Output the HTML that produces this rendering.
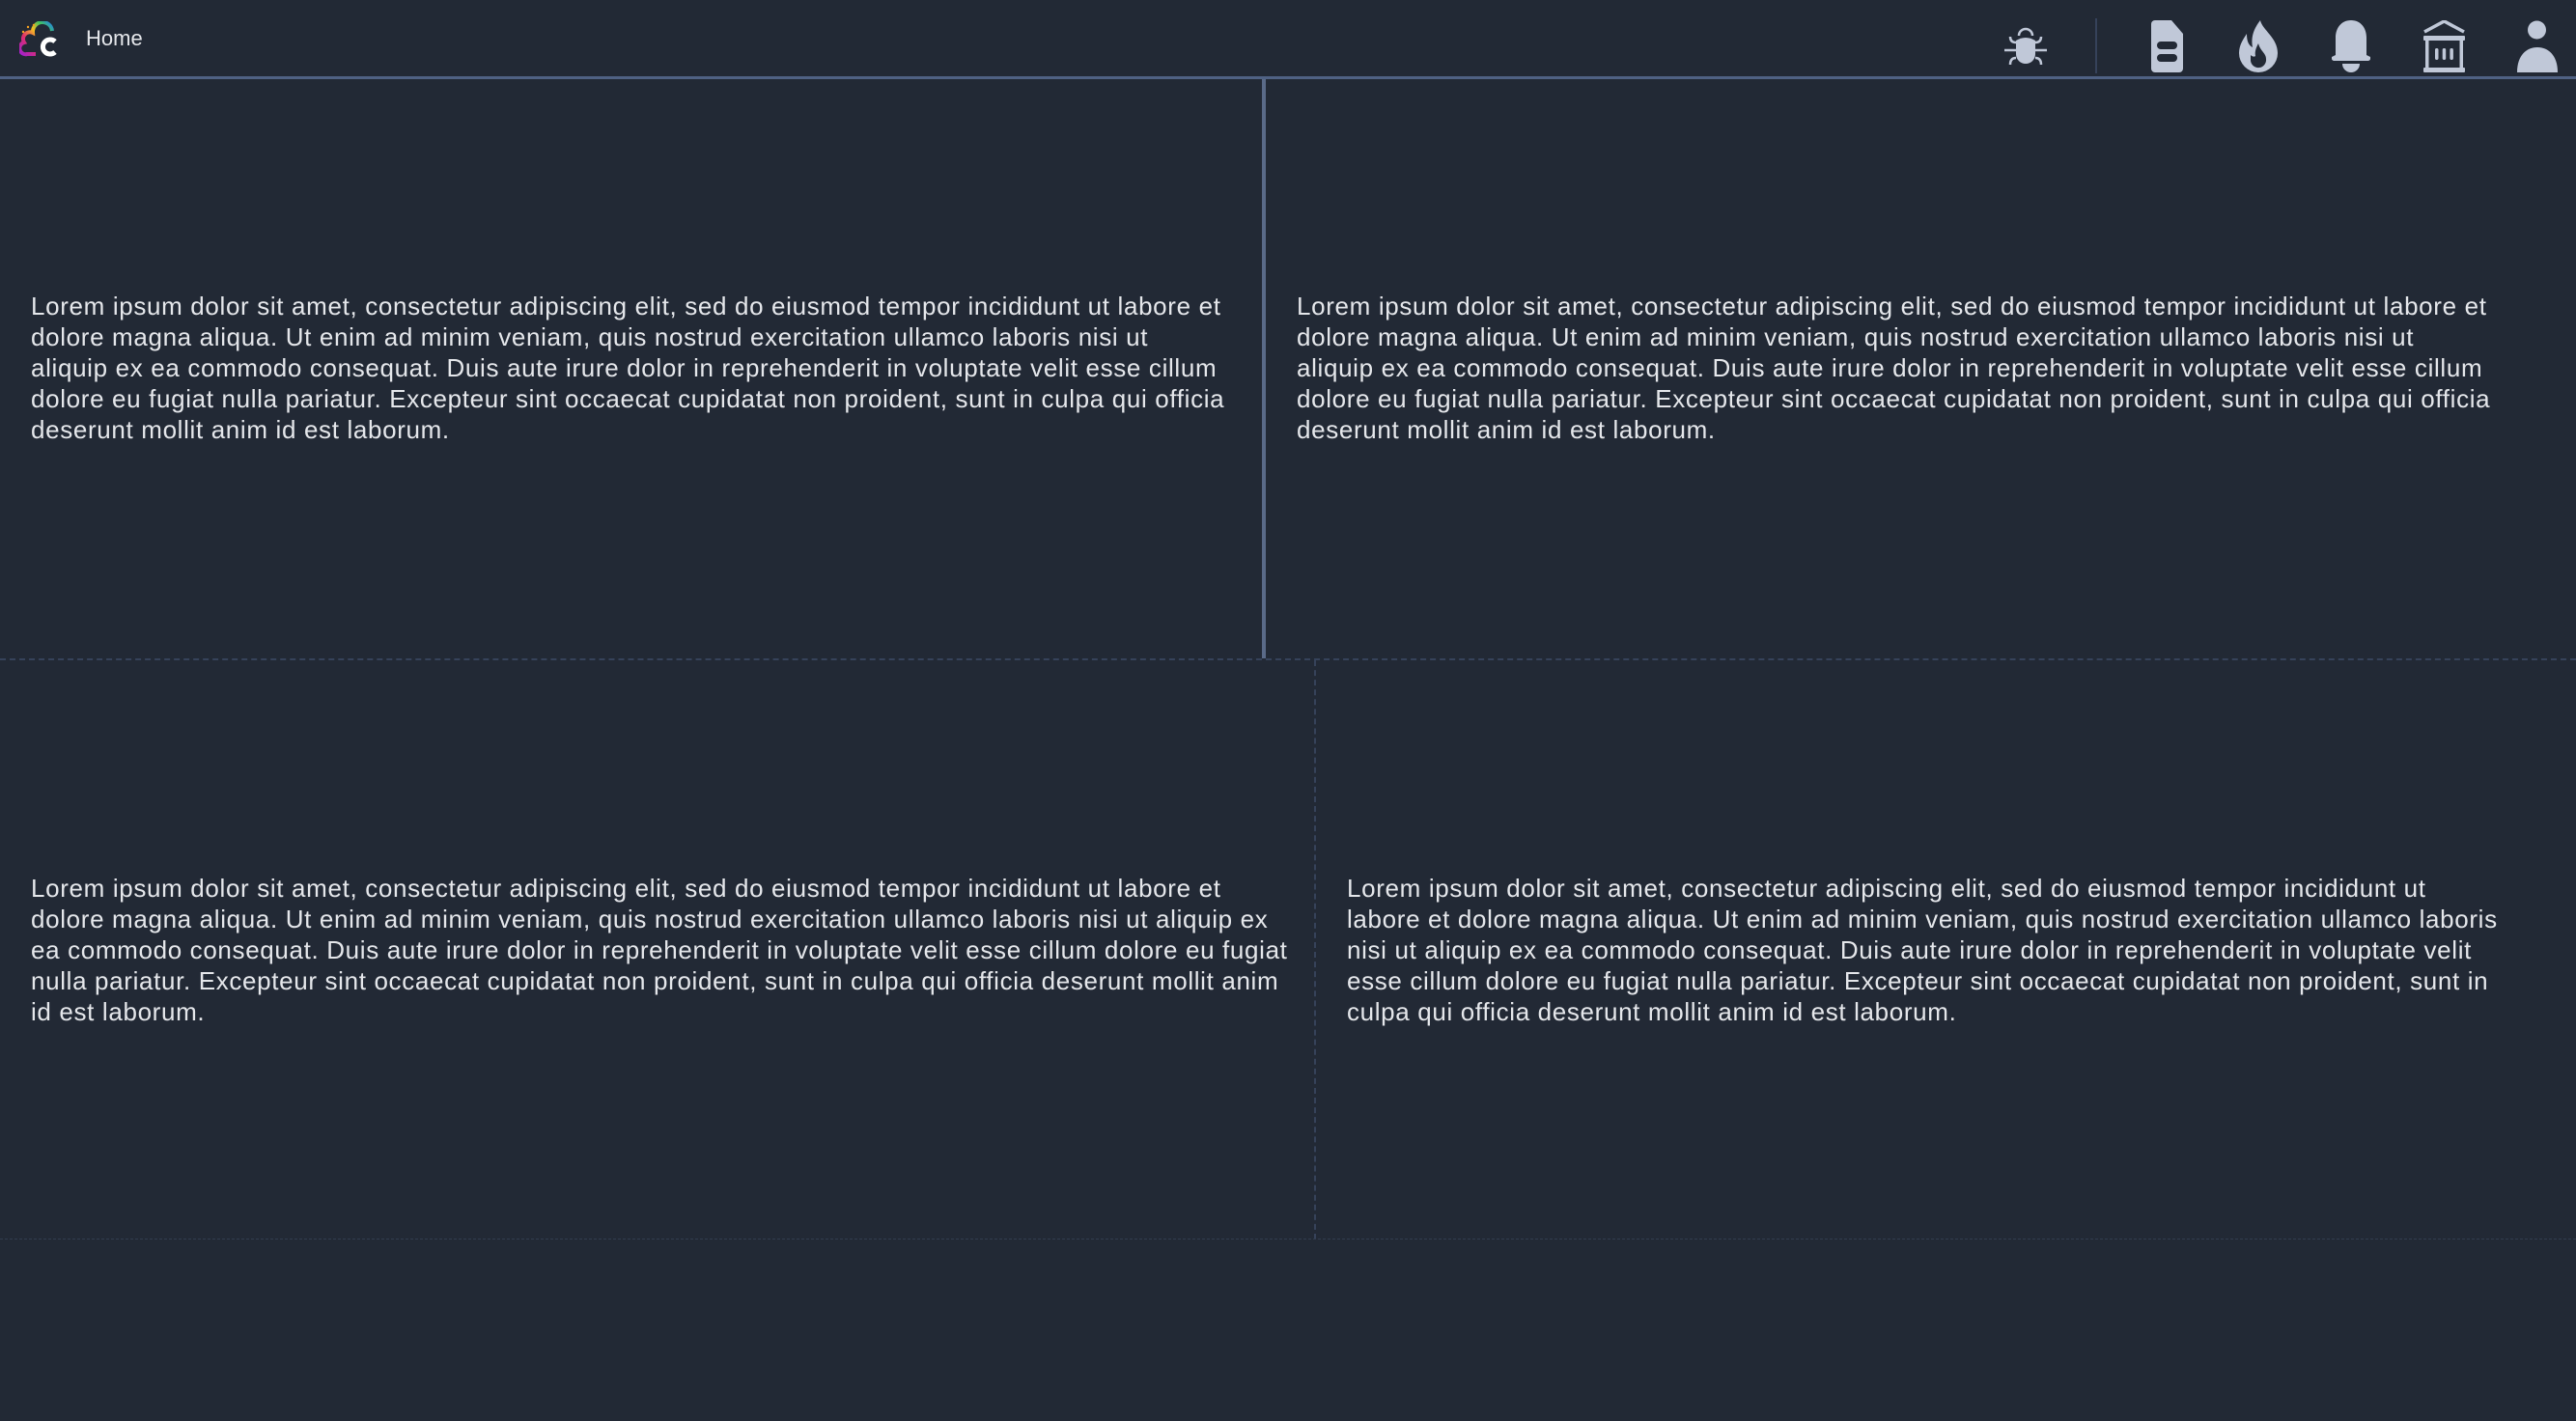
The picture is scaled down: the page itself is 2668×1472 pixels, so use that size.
<!DOCTYPE html>
<html><head><meta charset="utf-8"><style>
*{margin:0;padding:0;box-sizing:border-box}
html,body{width:2668px;height:1472px;background:#222935;overflow:hidden;font-family:"Liberation Sans",sans-serif;color:#e5e7eb}
.hdr{position:absolute;left:0;top:0;width:2668px;height:82px;border-bottom:3px solid #4f6183}
.home{position:absolute;left:89px;top:27px;font-size:22px;color:#e5e7eb}
.t{position:absolute;font-size:26px;line-height:32px;letter-spacing:0.65px;white-space:nowrap;color:#e5e7eb}
.ic{position:absolute;fill:#c0c8d8}
</style></head><body>
<div class="hdr"></div>
<svg style="position:absolute;left:20px;top:22px" width="42" height="38" viewBox="0 0 42 38">
<defs><linearGradient id="g" x1="0" y1="1" x2="1" y2="0"><stop offset="0" stop-color="#a020d0"/><stop offset="0.35" stop-color="#e0306a"/><stop offset="0.6" stop-color="#f5c020"/><stop offset="0.8" stop-color="#40c060"/><stop offset="1" stop-color="#2080f0"/></linearGradient></defs>
<path d="M17 34 H8 A6 6 0 0 1 5 22 A7 7 0 0 1 14 12 A10 10 0 0 1 34 10" fill="none" stroke="url(#g)" stroke-width="4"/>
<circle cx="4" cy="11" r="1.2" fill="#f5a020"/><circle cx="9" cy="6" r="1.2" fill="#f5a020"/><circle cx="15" cy="4" r="1.2" fill="#f5a020"/>
<path d="M37 21 A7.5 7.5 0 1 0 37 32" fill="none" stroke="#fff" stroke-width="5"/>
</svg>
<div class="home">Home</div>
<svg class="ic" style="left:2076px;top:28px" width="44" height="42" viewBox="0 0 44 42">
<path d="M15 9 A7 7 0 0 1 29 9" fill="none" stroke="#c0c8d8" stroke-width="2.5"/>
<path d="M12 14 Q22 8 32 14 V28 A10 10 0 0 1 12 28 Z"/>
<g stroke="#c0c8d8" stroke-width="2.5" fill="none"><path d="M0 24 H44"/><path d="M12 16 Q6 16 6 10"/><path d="M32 16 Q38 16 38 10"/><path d="M12 32 Q6 32 6 39"/><path d="M32 32 Q38 32 38 39"/></g>
</svg>
<div style="position:absolute;left:2170px;top:19px;width:2px;height:57px;background:#36425a"></div>
<svg class="ic" style="left:2228px;top:21px" width="33" height="54" viewBox="0 0 33 54">
<path d="M4 0 H21 L33 14 V50 A4 4 0 0 1 29 54 H4 A4 4 0 0 1 0 50 V4 A4 4 0 0 1 4 0 Z"/>
<rect x="6" y="22" width="21" height="8" rx="4" fill="#222935"/><rect x="6" y="35" width="21" height="8" rx="4" fill="#222935"/>
</svg>
<svg class="ic" style="left:2319px;top:21px" width="40" height="54" viewBox="0 0 40 54">
<path d="M22 0 C24 10 40 18 40 34 A20 20 0 0 1 0 34 C0 26 4 20 8 14 C8 22 10 26 14 28 C12 16 16 8 22 0 Z"/>
<path d="M20 24 C22 32 28 34 28 40 A8 8 0 0 1 12 42 L12 36 C14 38 16 38 17 37 C16 32 18 28 20 24 Z" fill="#222935"/>
</svg>
<svg class="ic" style="left:2415px;top:21px" width="40" height="54" viewBox="0 0 40 54">
<path d="M20 0 C30 0 36 8 36 18 V36 L40 38 A3 3 0 0 1 38 42 H2 A3 3 0 0 1 0 38 L4 36 V18 C4 8 10 0 20 0 Z"/>
<path d="M11 45 H29 A9 9 0 0 1 11 45 Z"/>
</svg>
<svg class="ic" style="left:2509px;top:21px" width="45" height="54" viewBox="0 0 45 54">
<path d="M2 12 L22.5 1 L43 12" fill="none" stroke="#c0c8d8" stroke-width="3.5" stroke-linejoin="round"/>
<rect x="1" y="16" width="43" height="5" rx="1"/>
<rect x="3" y="21" width="3.5" height="28"/><rect x="38.5" y="21" width="3.5" height="28"/>
<rect x="1" y="49" width="43" height="5" rx="1"/>
<rect x="13" y="29" width="3.5" height="12" rx="1.7"/><rect x="20.7" y="29" width="3.5" height="12" rx="1.7"/><rect x="28.4" y="29" width="3.5" height="12" rx="1.7"/>
</svg>
<svg class="ic" style="left:2607px;top:21px" width="42" height="54" viewBox="0 0 42 54">
<circle cx="20.5" cy="10" r="9.5"/>
<path d="M0 54 C0 36 10 28 21 28 C32 28 42 36 42 54 Z"/>
</svg>
<div style="position:absolute;left:1307px;top:82px;width:4px;height:600px;background:#5a6a88"></div>
<div style="position:absolute;left:0;top:682px;width:2668px;border-top:2px dashed #36425a"></div>
<div style="position:absolute;left:1361px;top:684px;height:600px;border-left:2px dashed #36425a"></div>
<div style="position:absolute;left:0;top:1283px;width:2668px;border-top:1px dashed #313c4f"></div>

<div class="t" style="left:32px;top:301px">Lorem ipsum dolor sit amet, consectetur adipiscing elit, sed do eiusmod tempor incididunt ut labore et<br>dolore magna aliqua. Ut enim ad minim veniam, quis nostrud exercitation ullamco laboris nisi ut<br>aliquip ex ea commodo consequat. Duis aute irure dolor in reprehenderit in voluptate velit esse cillum<br>dolore eu fugiat nulla pariatur. Excepteur sint occaecat cupidatat non proident, sunt in culpa qui officia<br>deserunt mollit anim id est laborum.</div>
<div class="t" style="left:1343px;top:301px">Lorem ipsum dolor sit amet, consectetur adipiscing elit, sed do eiusmod tempor incididunt ut labore et<br>dolore magna aliqua. Ut enim ad minim veniam, quis nostrud exercitation ullamco laboris nisi ut<br>aliquip ex ea commodo consequat. Duis aute irure dolor in reprehenderit in voluptate velit esse cillum<br>dolore eu fugiat nulla pariatur. Excepteur sint occaecat cupidatat non proident, sunt in culpa qui officia<br>deserunt mollit anim id est laborum.</div>
<div class="t" style="left:32px;top:904px">Lorem ipsum dolor sit amet, consectetur adipiscing elit, sed do eiusmod tempor incididunt ut labore et<br>dolore magna aliqua. Ut enim ad minim veniam, quis nostrud exercitation ullamco laboris nisi ut aliquip ex<br>ea commodo consequat. Duis aute irure dolor in reprehenderit in voluptate velit esse cillum dolore eu fugiat<br>nulla pariatur. Excepteur sint occaecat cupidatat non proident, sunt in culpa qui officia deserunt mollit anim<br>id est laborum.</div>
<div class="t" style="left:1395px;top:904px">Lorem ipsum dolor sit amet, consectetur adipiscing elit, sed do eiusmod tempor incididunt ut<br>labore et dolore magna aliqua. Ut enim ad minim veniam, quis nostrud exercitation ullamco laboris<br>nisi ut aliquip ex ea commodo consequat. Duis aute irure dolor in reprehenderit in voluptate velit<br>esse cillum dolore eu fugiat nulla pariatur. Excepteur sint occaecat cupidatat non proident, sunt in<br>culpa qui officia deserunt mollit anim id est laborum.</div>
</body></html>
